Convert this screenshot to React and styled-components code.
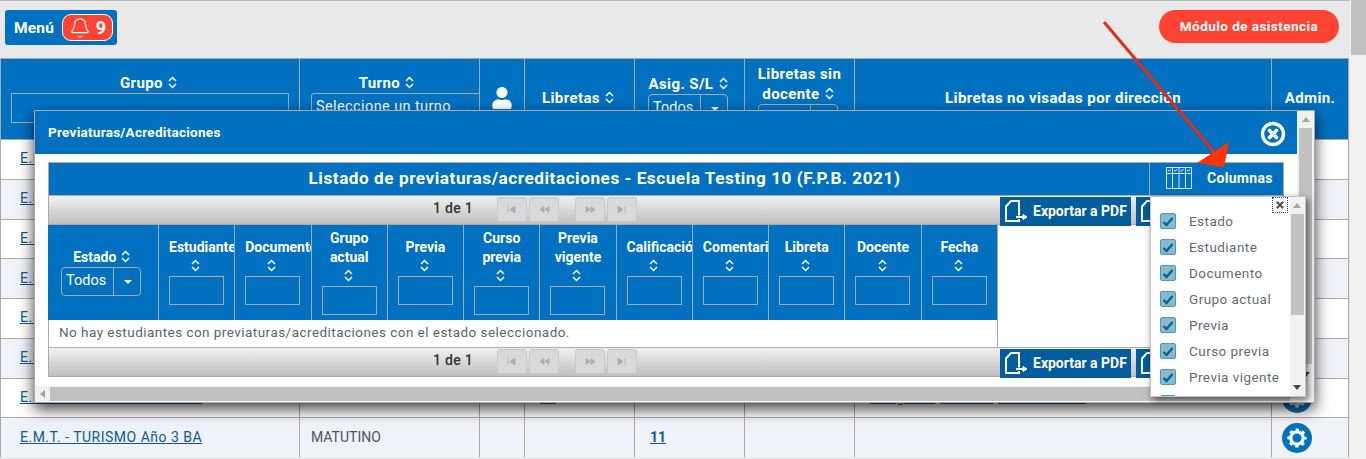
import React from 'react';
import styled, { createGlobalStyle } from 'styled-components';
import { Bell } from 'lucide-react';
import { FaUser } from 'react-icons/fa';

const BLUE = '#0071c1';
const LINE = '#a9a9a9';

const GlobalStyle = createGlobalStyle`
  html, body {
    margin: 0;
    height: 459px;
    overflow: hidden;
    background: #f1f1f1;
    font-family: Roboto, "Liberation Sans", sans-serif;
  }
  * { box-sizing: border-box; }
`;

const Page = styled.div`
  position: relative;
  display: flex;
  width: 1366px;
  height: 459px;
  overflow: hidden;
`;

const Main = styled.div`
  width: 1350px;
  background: #e9e9e9;
  border-top: 1px solid #b8b8b8;
`;

const PageScrollbar = styled.div`
  width: 16px;
  background: #f1f1f1;
`;

const PageThumb = styled.div`
  height: 55px;
  margin-left: 1px;
  background: #c1c1c1;
`;

const TopBar = styled.div`
  display: flex;
  justify-content: space-between;
  align-items: flex-start;
  height: 57px;
  padding: 9px 11px 0 5px;
`;

const MenuButton = styled.div`
  display: flex;
  align-items: center;
  gap: 8px;
  width: 112px;
  height: 35px;
  padding-left: 9px;
  border-radius: 3px;
  background: ${BLUE};
  color: #fff;
  font-size: 15.5px;
  font-weight: 700;
  letter-spacing: 0.2px;
`;

const Badge = styled.div`
  display: flex;
  align-items: center;
  justify-content: center;
  gap: 5px;
  width: 51px;
  height: 27px;
  border: 1px solid #fff;
  border-radius: 9px;
  background: #ff4433;
  font-size: 18px;
  font-weight: 700;
`;

const AttendanceButton = styled.div`
  display: flex;
  align-items: center;
  justify-content: center;
  width: 180px;
  height: 33px;
  padding-bottom: 2px;
  border-radius: 17px;
  background: #ff4433;
  color: #fff;
  font-size: 13.5px;
  font-weight: 700;
  letter-spacing: 0.45px;
`;

const Table = styled.div`
  width: 1349px;
  border-left: 1px solid ${LINE};
`;

const columns = '299px 180px 45px 110px 110px 110px 417px 77px';

const HeadRow = styled.div`
  display: grid;
  grid-template-columns: ${columns};
  height: 81px;
  background: ${BLUE};
  border-top: 1px solid ${LINE};
`;

const HeadCell = styled.div`
  display: flex;
  flex-direction: column;
  justify-content: center;
  align-items: ${(p) => (p.$left ? 'flex-start' : 'center')};
  padding: 0 ${(p) => (p.$left ? '0 2px 11px' : '11px 2px')};
  border-right: 1px solid ${LINE};
  overflow: hidden;
  color: #fff;
  font-size: 15px;
  font-weight: 700;
  letter-spacing: 0.4px;
  line-height: 20px;
  text-align: center;
`;

const TurnoLabel = styled.div`
  align-self: center;
  margin-right: 14px;
`;

const Row = styled.div`
  display: grid;
  grid-template-columns: ${columns};
  height: 39.75px;
  background: ${(p) => (p.$alt ? '#eff2f8' : '#fff')};
  border-top: 1px solid ${LINE};
`;

const Cell = styled.div`
  display: flex;
  align-items: center;
  gap: 5px;
  padding: 0 0 ${(p) => (p.$flush ? 0 : 2)}px ${(p) => p.$pad ?? 15}px;
  border-right: 1px solid ${LINE};
  color: #4a5560;
  font-size: 14px;
`;

const RowLink = styled.a`
  color: #0b5a94;
  font-size: 14px;
  font-weight: ${(p) => (p.$strong ? 700 : 400)};
  letter-spacing: ${(p) => (p.$strong ? 0 : 0.5)}px;
  text-decoration: underline;
  white-space: nowrap;
`;

const GearButton = styled.div`
  display: flex;
  align-items: center;
  justify-content: center;
  width: 30px;
  height: 30px;
  border-radius: 50%;
  background: ${BLUE};
`;

const TextFilter = styled.div`
  flex: none;
  width: ${(p) => p.$width}px;
  height: ${(p) => p.$height || 29}px;
  border: 1px solid ${LINE};
`;

const TurnoFilter = styled.div`
  flex: none;
  width: 180px;
  height: 30px;
  padding-left: 4px;
  border: 1px solid ${LINE};
  border-radius: 3px 0 0 0;
  color: #fff;
  font-size: 14.5px;
  font-weight: 400;
  line-height: 26px;
  text-align: left;
  white-space: nowrap;
`;

const SelectBox = styled.div`
  display: flex;
  flex: none;
  width: ${(p) => p.$width}px;
  height: 29px;
  margin-left: ${(p) => p.$shift || 0}px;
  border: 1px solid ${LINE};
  border-radius: 4px;
  color: #fff;
  font-size: 14.5px;
  font-weight: 400;
  letter-spacing: 0;
  line-height: 26px;
  text-align: left;
`;

const SelectLabel = styled.div`
  flex: 1;
  padding-left: 4px;
  border-right: 1px solid ${LINE};
`;

const SelectArrow = styled.div`
  position: relative;
  width: 26px;
  &::after {
    content: '';
    position: absolute;
    left: 10px;
    top: 12px;
    border: 4px solid transparent;
    border-top: 4px solid #fff;
    border-bottom: 0;
  }
`;

const Modal = styled.div`
  position: absolute;
  left: 34px;
  top: 110px;
  display: flex;
  flex-direction: column;
  width: 1281px;
  height: 293px;
  background: #fff;
  border: 1px solid ${LINE};
  box-shadow: 0 6px 14px rgba(0, 0, 0, 0.75);
`;

const ModalTop = styled.div`
  display: flex;
  height: 275px;
`;

const ModalMain = styled.div`
  flex: 1;
  min-width: 0;
`;

const ModalHeader = styled.div`
  display: flex;
  align-items: center;
  justify-content: space-between;
  height: 43px;
  padding: 0 11px 0 13px;
  background: ${BLUE};
  color: #fff;
`;

const ModalTitle = styled.div`
  padding-bottom: 2px;
  font-size: 13.5px;
  font-weight: 700;
  letter-spacing: 0.27px;
`;

const ModalClose = styled.svg`
  margin-top: 2px;
`;

const ModalBody = styled.div`
  padding: 8px 13px 0;
`;

const VScroll = styled.div`
  display: flex;
  flex-direction: column;
  align-items: center;
  width: 17px;
  padding: 0 1px;
  background: #f1f1f1;
`;

const VThumb = styled.div`
  width: 13px;
  height: 236px;
  background: #c1c1c1;
`;

const ScrollArrow = styled.div`
  flex: none;
  width: 0;
  height: 0;
  margin: ${(p) => p.$margin};
  border-left: 4px solid transparent;
  border-right: 4px solid transparent;
  ${(p) => (p.$down ? 'border-top' : 'border-bottom')}: 5px solid ${(p) => p.$color || '#a3a3a3'};
`;

const HScroll = styled.div`
  display: flex;
  align-items: center;
  height: 15px;
  background: #f1f1f1;
`;

const LeftArrow = styled.div`
  flex: none;
  width: 0;
  height: 0;
  margin: 0 5px 0 5px;
  border-top: 4px solid transparent;
  border-bottom: 4px solid transparent;
  border-right: 5px solid #a3a3a3;
`;

const HThumb = styled.div`
  width: 1240px;
  height: 14px;
  background: #c1c1c1;
`;

const ListTitle = styled.div`
  display: flex;
  height: 33px;
  border: 1px solid ${LINE};
  border-bottom: 0;
  background: ${BLUE};
  color: #fff;
`;

const ListHeading = styled.div`
  flex: 1;
  padding-left: 11px;
  font-size: 17.2px;
  font-weight: 700;
  letter-spacing: 0.53px;
  line-height: 30px;
  text-align: center;
`;

const ColumnsToggle = styled.div`
  display: flex;
  align-items: center;
  gap: 14px;
  width: 134px;
  padding: 0 0 3px 16px;
  border-left: 1px solid ${LINE};
  font-size: 14px;
  font-weight: 700;
  letter-spacing: 0.3px;
`;

const Paginator = styled.div`
  display: flex;
  align-items: flex-start;
  height: 30px;
  padding-left: 384px;
  border: 1px solid ${LINE};
  background: linear-gradient(#f1f1f1, #bfbfbf);
`;

const PageInfo = styled.div`
  width: 64px;
  color: #333;
  font-size: 14px;
  font-weight: 500;
  letter-spacing: 0.3px;
  line-height: 25px;
`;

const PageButton = styled.div`
  display: flex;
  align-items: center;
  justify-content: center;
  width: 30px;
  height: 25px;
  margin: 1px ${(p) => (p.$spaced ? '16px' : '2px')} 0 0;
  border: 1px solid #c8c8c8;
  border-radius: 3px;
  background: #d9d9d9;
  color: #a4b0b9;
`;

const ExportButton = styled.div`
  display: flex;
  align-items: center;
  flex: none;
  gap: 5px;
  width: 131px;
  height: 29px;
  margin: 1px 0 0 5px;
  padding: 0 0 2px 4px;
  background: #035c9b;
  color: #fff;
  font-size: 14px;
  font-weight: 700;
  white-space: nowrap;
  overflow: hidden;
`;

const ExportGroup = styled.div`
  display: flex;
  margin-left: 356px;
`;

const ListTable = styled.div`
  width: 950px;
`;

const ListHead = styled.div`
  display: grid;
  grid-template-columns: 111px repeat(11, 76.27px);
  height: 95px;
  background: ${BLUE};
`;

const ListHeadCell = styled.div`
  display: flex;
  flex-direction: column;
  justify-content: center;
  padding: 0 10px 2px 10px;
  border-right: 1px solid ${LINE};
  overflow: hidden;
  color: #fff;
  font-size: 14px;
  font-weight: 700;
  line-height: 19px;
  text-align: center;
`;

const SortLine = styled.div`
  height: 19px;
`;

const EmptyRow = styled.div`
  height: 27px;
  padding-left: 10px;
  border: 1px solid ${LINE};
  border-top: 0;
  border-bottom: 0;
  color: #5a6470;
  font-size: 13.5px;
  letter-spacing: 0.46px;
  line-height: 25px;
`;

const ColumnsPopup = styled.div`
  position: absolute;
  left: 1150px;
  top: 196px;
  display: flex;
  width: 156px;
  height: 201px;
  overflow: hidden;
  background: #fff;
  border: 1px solid #c4c4c4;
  box-shadow: 2px 3px 7px rgba(0, 0, 0, 0.6);
`;

const PopupList = styled.div`
  position: relative;
  flex: 1;
  padding: 11px 0 0 9px;
`;

const PopupClose = styled.div`
  position: absolute;
  top: 1px;
  right: 3px;
  display: flex;
  align-items: center;
  justify-content: center;
  width: 14px;
  height: 14px;
  outline: 1px dotted #26506b;
  color: #555;
`;

const ColumnOption = styled.div`
  display: flex;
  align-items: center;
  gap: 13px;
  height: 26px;
  color: #5f6b78;
  font-size: 13.5px;
  letter-spacing: 0.45px;
  white-space: nowrap;
`;

const CheckBox = styled.div`
  display: flex;
  flex: none;
  align-items: center;
  justify-content: center;
  width: 16px;
  height: 16px;
  border: 1px solid #4f97b2;
  border-radius: 2px;
  background: #86bad3;
  color: #13627f;
`;

const PopupScroll = styled.div`
  display: flex;
  flex: none;
  flex-direction: column;
  align-items: center;
  width: 15px;
  padding-right: 1px;
  background: #f1f1f1;
`;

const PopupThumb = styled.div`
  width: 13px;
  height: 101px;
  background: #c1c1c1;
`;

const ArrowMark = styled.svg`
  position: absolute;
  left: 1100px;
  top: 18px;
  pointer-events: none;
`;

const SortSvg = styled.svg`
  margin: 0 3px 0 1px;
  vertical-align: -1px;
`;

const SortIcon = () => (
  <SortSvg width="9" height="13" viewBox="0 0 9 13" fill="none" stroke="#fff" strokeWidth="1.5">
    <path d="M1 5 L4.5 1.5 L8 5" />
    <path d="M1 8 L4.5 11.5 L8 8" />
  </SortSvg>
);

const CloseIcon = () => (
  <ModalClose width="26" height="26" viewBox="0 0 26 26" fill="none" stroke="#fff">
    <circle cx="13" cy="13" r="10.5" strokeWidth="3.4" />
    <path d="M9.5 9.5 L16.5 16.5 M16.5 9.5 L9.5 16.5" strokeWidth="3.6" strokeLinecap="round" />
  </ModalClose>
);

const GearIcon = () => (
  <svg width="22" height="22" viewBox="0 0 22 22" fill="none" stroke="#fff">
    <circle cx="11" cy="11" r="6.2" strokeWidth="3.2" />
    <circle cx="11" cy="11" r="8.4" strokeWidth="2.4" strokeDasharray="3.2 3.4" strokeDashoffset="1.6" />
  </svg>
);

const ColumnsIcon = () => (
  <svg width="27" height="22" viewBox="0 0 27 22" fill="none" stroke="#d6e6f3" strokeWidth="1">
    <rect x="0.5" y="0.5" width="25" height="21" />
    <path d="M0.5 6.5 H25.5 M6.5 0.5 V21.5 M13 0.5 V21.5 M19.5 0.5 V21.5" />
    <path d="M2 3 L3.2 4.4 L5 2 M8 3 L9.2 4.4 L11 2 M14.5 3 L15.7 4.4 L17.5 2 M21 3 L22.2 4.4 L24 2" />
  </svg>
);

const ExportIcon = () => (
  <svg width="24" height="24" viewBox="0 0 24 24" fill="none" stroke="#fff" strokeWidth="2" style={{ flex: 'none' }}>
    <path d="M15 16.5 V2 H7 L2 7.5 V22 H15 V20" />
    <path d="M12 18 H19" />
    <path d="M19 15.5 L23 18 L19 20.5 Z" fill="#fff" strokeWidth="1" />
  </svg>
);

const paths = {
  first: 'M1 1 V8 M3 4.5 L8 1 V8 Z',
  prev: 'M1 4.5 L5 1.5 V7.5 Z M6 4.5 L10 1.5 V7.5 Z',
  next: 'M1 1.5 L5 4.5 L1 7.5 Z M6 1.5 L10 4.5 L6 7.5 Z',
  last: 'M1 1 L6 4.5 L1 8 Z M8 1 V8',
};

const PagerIcon = ({ kind }) => (
  <svg width="11" height="9" viewBox="0 0 11 9" fill="currentColor" stroke="currentColor" strokeWidth="0.8">
    <path d={paths[kind]} />
  </svg>
);

const SmallCheck = () => (
  <svg width="12" height="11" viewBox="0 0 12 11" fill="none" stroke="currentColor" strokeWidth="2.4">
    <path d="M1.5 6 L4.5 9 L10.5 2" />
  </svg>
);

const PagerBar = () => (
  <Paginator>
    <PageInfo>1 de 1</PageInfo>
    <PageButton><PagerIcon kind="first" /></PageButton>
    <PageButton $spaced><PagerIcon kind="prev" /></PageButton>
    <PageButton><PagerIcon kind="next" /></PageButton>
    <PageButton><PagerIcon kind="last" /></PageButton>
    <ExportGroup>
      <ExportButton><ExportIcon />Exportar a PDF</ExportButton>
      <ExportButton><ExportIcon />Exportar a PDF</ExportButton>
    </ExportGroup>
  </Paginator>
);

const listColumns = ['Estudiante', 'Documento', 'Grupo actual', 'Previa', 'Curso previa', 'Previa vigente', 'Calificación', 'Comentario', 'Libreta', 'Docente', 'Fecha'];

const columnOptions = ['Estado', 'Estudiante', 'Documento', 'Grupo actual', 'Previa', 'Curso previa', 'Previa vigente', 'Calificación'];

const rows = [
  { libretas: '8' },
  { libretas: '10' },
  { libretas: '6' },
  { libretas: '9' },
  { libretas: '7' },
  { libretas: '12' },
  { libretas: '14', notes: ['Geografía', 'Historia', 'Matemática I'] },
  { asig: '11' },
];

export default function App() {
  return (
    <Page>
      <GlobalStyle />
      <Main>
        <TopBar>
          <MenuButton>
            Menú
            <Badge><Bell size={22} strokeWidth={1.3} />9</Badge>
          </MenuButton>
          <AttendanceButton>Módulo de asistencia</AttendanceButton>
        </TopBar>
        <Table>
          <HeadRow>
            <HeadCell>
              <div>Grupo <SortIcon /></div>
              <TextFilter $width={278} $height={30} />
            </HeadCell>
            <HeadCell $left>
              <TurnoLabel>Turno <SortIcon /></TurnoLabel>
              <TurnoFilter>Seleccione un turno</TurnoFilter>
            </HeadCell>
            <HeadCell><FaUser size={22} /></HeadCell>
            <HeadCell><div>Libretas <SortIcon /></div></HeadCell>
            <HeadCell>
              <div>Asig. S/L <SortIcon /></div>
              <SelectBox $width={80} $shift={-3}><SelectLabel>Todos</SelectLabel><SelectArrow /></SelectBox>
            </HeadCell>
            <HeadCell>
              <div>Libretas sin docente <SortIcon /></div>
              <SelectBox $width={80} $shift={-3}><SelectLabel>Todos</SelectLabel><SelectArrow /></SelectBox>
            </HeadCell>
            <HeadCell><div>Libretas no visadas por dirección</div></HeadCell>
            <HeadCell><div>Admin.</div></HeadCell>
          </HeadRow>
          {rows.map((row, i) => (
            <Row key={i} $alt={i % 2 === 1}>
              <Cell $pad={19}><RowLink href="#">E.M.T. - TURISMO Año 3 BA</RowLink></Cell>
              <Cell $pad={11}>MATUTINO</Cell>
              <Cell />
              <Cell>{row.libretas && <RowLink href="#" $strong>{row.libretas}</RowLink>}</Cell>
              <Cell>{row.asig && <RowLink href="#" $strong>{row.asig}</RowLink>}</Cell>
              <Cell />
              <Cell>
                {row.notes && row.notes.map((n) => <RowLink href="#" key={n}>{n}</RowLink>)}
              </Cell>
              <Cell $pad={10} $flush><GearButton><GearIcon /></GearButton></Cell>
            </Row>
          ))}
        </Table>
      </Main>
      <PageScrollbar><PageThumb /></PageScrollbar>

      <Modal>
        <ModalTop>
          <ModalMain>
            <ModalHeader>
              <ModalTitle>Previaturas/Acreditaciones</ModalTitle>
              <CloseIcon />
            </ModalHeader>
            <ModalBody>
              <ListTitle>
                <ListHeading>Listado de previaturas/acreditaciones - Escuela Testing 10 (F.P.B. 2021)</ListHeading>
                <ColumnsToggle><ColumnsIcon />Columnas</ColumnsToggle>
              </ListTitle>
              <PagerBar />
              <ListTable>
                <ListHead>
                  <ListHeadCell>
                    <div>Estado <SortIcon /></div>
                    <SelectBox $width={80} $shift={3}><SelectLabel>Todos</SelectLabel><SelectArrow /></SelectBox>
                  </ListHeadCell>
                  {listColumns.map((title) => (
                    <ListHeadCell key={title}>
                      <div>{title}</div>
                      <SortLine><SortIcon /></SortLine>
                      <TextFilter $width={55} />
                    </ListHeadCell>
                  ))}
                </ListHead>
                <EmptyRow>No hay estudiantes con previaturas/acreditaciones con el estado seleccionado.</EmptyRow>
              </ListTable>
              <PagerBar />
            </ModalBody>
          </ModalMain>
          <VScroll>
            <ScrollArrow $margin="6px 0 6px" />
            <VThumb />
            <ScrollArrow $down $color="#444" $margin="8px 0 0" />
          </VScroll>
        </ModalTop>
        <HScroll>
          <LeftArrow />
          <HThumb />
        </HScroll>
      </Modal>

      <ColumnsPopup>
        <PopupList>
          <PopupClose>
            <svg width="8" height="8" viewBox="0 0 10 10" stroke="currentColor" strokeWidth="2.8"><path d="M1 1 L9 9 M9 1 L1 9" /></svg>
          </PopupClose>
          {columnOptions.map((name) => (
            <ColumnOption key={name}>
              <CheckBox><SmallCheck /></CheckBox>
              {name}
            </ColumnOption>
          ))}
        </PopupList>
        <PopupScroll>
          <ScrollArrow $margin="6px 0 6px" />
          <PopupThumb />
          <ScrollArrow $down $color="#444" $margin="auto 0 6px" />
        </PopupScroll>
      </ColumnsPopup>

      <ArrowMark width="135" height="155" viewBox="1100 18 135 155">
        <path d="M1104 22 L1214 152" stroke="#e62a17" strokeWidth="3" />
        <path d="M1229 142 L1197 163 L1224 167 Z" fill="#ff3300" />
      </ArrowMark>
    </Page>
  );
}
